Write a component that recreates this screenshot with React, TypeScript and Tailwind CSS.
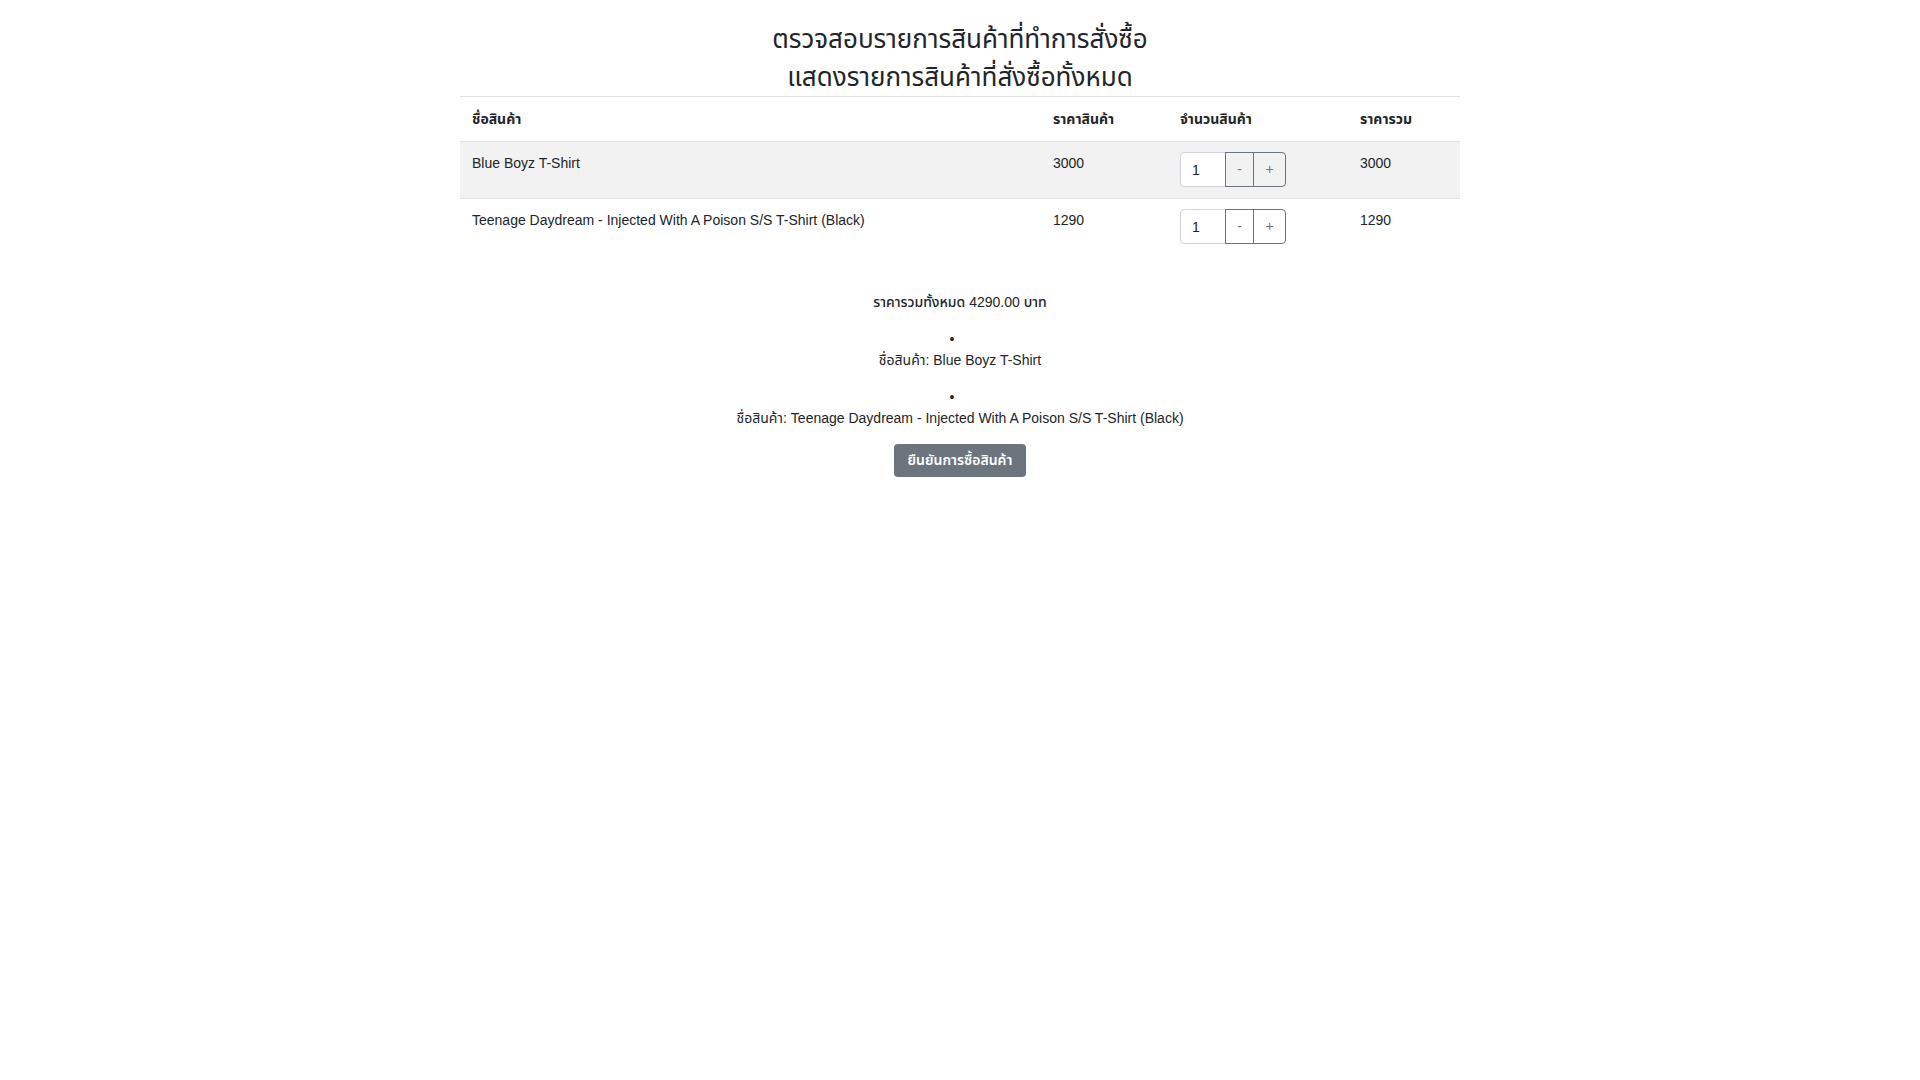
import { useState } from "react";

const FONT = { fontFamily: '"Liberation Sans", "Noto Sans Thai", "Noto Sans", "DejaVu Sans", sans-serif' };

type Item = { id: number; name: string; price: number; qty: number };

const INITIAL: Item[] = [
  { id: 1, name: "Blue Boyz T-Shirt", price: 3000, qty: 1 },
  { id: 2, name: "Teenage Daydream - Injected With A Poison S/S T-Shirt (Black)", price: 1290, qty: 1 },
];

function QtyControl({ value, onChange }: { value: number; onChange: (v: number) => void }) {
  return (
    <div className="flex h-[35px] w-[107px]">
      <input
        type="text"
        value={value}
        readOnly
        className="w-[46px] h-full bg-white border border-[#ced4da] rounded-l-[4px] pl-[11px] text-[14px] text-[#212529] outline-none"
      />
      <button
        onClick={() => onChange(Math.max(1, value - 1))}
        className="w-[29px] h-full border border-[#6c757d] -ml-px text-[14px] text-[#6c757d]"
      >
        -
      </button>
      <button
        onClick={() => onChange(value + 1)}
        className="w-[33px] h-full border border-[#6c757d] -ml-px rounded-r-[4px] text-[14px] text-[#6c757d]"
      >
        +
      </button>
    </div>
  );
}

export default function App() {
  const [items, setItems] = useState(INITIAL);
  const total = items.reduce((s, i) => s + i.price * i.qty, 0);

  function setQty(id: number, qty: number) {
    setItems((prev) => prev.map((i) => (i.id === id ? { ...i, qty } : i)));
  }

  return (
    <div className="min-h-screen bg-white text-[#212529]" style={FONT}>
      <div className="w-[1000px] mx-auto">
        {/* Heading */}
        <div className="pt-[20px] text-center text-[26px] leading-[38px]">
          <h3>ตรวจสอบรายการสินค้าที่ทำการสั่งซื้อ</h3>
          <h3>แสดงรายการสินค้าที่สั่งซื้อทั้งหมด</h3>
        </div>

        {/* Table */}
        <table className="w-full border-collapse text-[14px] leading-[21px]">
          <thead>
            <tr className="border-t border-b border-[#dee2e6]">
              <th className="w-[581px] px-3 pt-[12px] pb-[11px] text-left font-bold">ชื่อสินค้า</th>
              <th className="w-[127px] px-3 pt-[12px] pb-[11px] text-left font-bold">ราคาสินค้า</th>
              <th className="w-[180px] px-3 pt-[12px] pb-[11px] text-left font-bold">จำนวนสินค้า</th>
              <th className="px-3 pt-[12px] pb-[11px] text-left font-bold">ราคารวม</th>
            </tr>
          </thead>
          <tbody>
            {items.map((item, idx) => (
              <tr
                key={item.id}
                className={idx % 2 === 0 ? "bg-[#f2f2f2] border-b border-[#dee2e6]" : "bg-white"}
              >
                <td className="px-3 pt-[11px] pb-[10px] align-top">{item.name}</td>
                <td className="px-3 pt-[11px] pb-[10px] align-top">{item.price}</td>
                <td className="px-3 pt-[10px] pb-[11px] align-top">
                  <QtyControl value={item.qty} onChange={(v) => setQty(item.id, v)} />
                </td>
                <td className="px-3 pt-[11px] pb-[10px] align-top">{item.price * item.qty}</td>
              </tr>
            ))}
          </tbody>
        </table>

        {/* Summary */}
        <div className="mt-[37px] flex flex-col items-center text-[14px] leading-[21px]">
          <p className="font-medium">ราคารวมทั้งหมด {total.toFixed(2)} บาท</p>
          <ul className="mt-[16px] flex flex-col items-center gap-[16px]">
            {items.map((item) => (
              <li key={item.id} className="flex flex-col items-center">
                <span className="pr-[16px]">•</span>
                <span>ชื่อสินค้า: {item.name}</span>
              </li>
            ))}
          </ul>
          <button className="mt-[15px] h-[33px] w-[132px] rounded-[4px] bg-[#6c757d] text-white text-[14px] font-semibold">
            ยืนยันการซื้อสินค้า
          </button>
        </div>
      </div>
    </div>
  );
}
